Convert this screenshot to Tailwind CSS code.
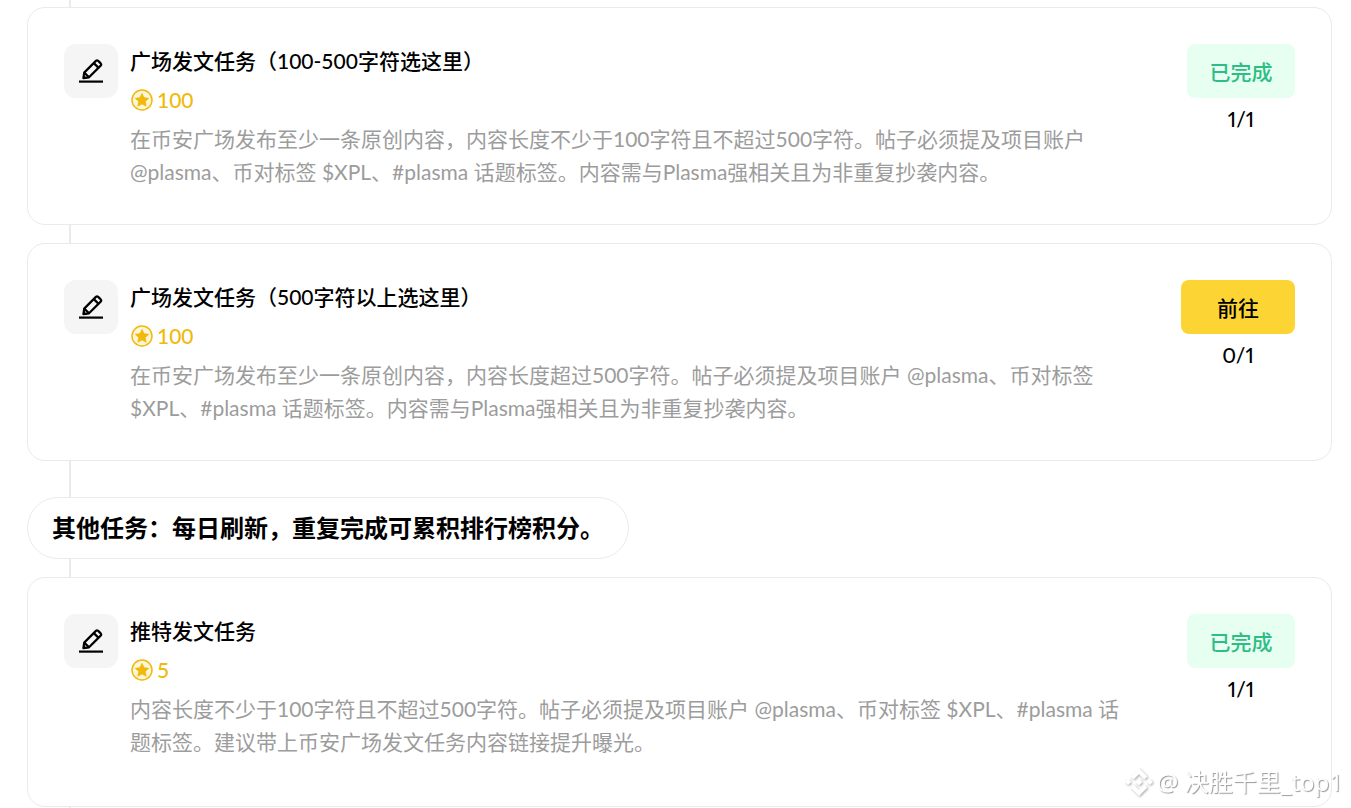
<!DOCTYPE html>
<html lang="zh-CN">
<head>
<meta charset="utf-8">
<meta name="viewport" content="width=device-width, initial-scale=1">
<title>广场任务</title>
<script src="https://cdn.jsdelivr.net/npm/@tailwindcss/browser@4"></script>
</head>
<body class="bg-white text-black font-[Lato,'Noto_Sans_CJK_SC',sans-serif] text-[21px] leading-[33px]">
<!-- Shared icons -->
<svg class="hidden" aria-hidden="true">
  <symbol id="pen" viewBox="0 0 24 24">
    <g fill="none" stroke="currentColor" stroke-width="2.2" stroke-linejoin="round">
      <path d="M4.4 19.2 5.2 13.6 16.9 1.9Q18 .9 19.2 1.9L21.700 4.400Q22.700 5.500 21.700 6.600L10 18.300Z"/>
      <path d="m14.800 4.100 4.800 4.800M5.200 13.600 10 18.300"/>
    </g>
    <path d="M4.200 19.400v-4l4 4z" fill="currentColor"/>
    <path d="M0 21.500h24v2.200H0z" fill="currentColor"/>
  </symbol>
  <symbol id="coin" viewBox="0 0 22 22">
    <circle cx="11" cy="11" r="10" fill="#fef6d8" stroke="#f0b90b" stroke-width="1.500"/>
    <path d="m11 4.300 2.100 4.300 4.700.7-3.400 3.300.8 4.700-4.200-2.200-4.200 2.200.8-4.700-3.400-3.300 4.700-.7z" fill="#f0b90b" stroke="#f0b90b" stroke-width=".6" stroke-linejoin="round"/>
  </symbol>
</svg>

<main class="flex flex-col pl-[27px] pr-[19px]">
  <div class="ml-[42px] h-[7px] w-0.5 bg-[#eaeaea]"></div>

  <article class="flex items-start rounded-[18px] border border-[#eaeaea] p-9">
    <div class="flex size-[54px] shrink-0 items-center justify-center rounded-xl bg-[#f5f5f5]"><svg class="size-6" aria-hidden="true"><use href="#pen"/></svg></div>
    <div class="flex min-w-0 flex-1 flex-col gap-1.5 pl-3 pr-12">
      <h3 class="font-medium">广场发文任务（100-500字符选这里）</h3>
      <p class="flex items-center gap-[3px] font-medium text-[#f0b90b]"><svg class="size-6 p-px" aria-hidden="true"><use href="#coin"/></svg>100</p>
      <p class="text-[#9c9c9c]">在币安广场发布至少一条原创内容，内容长度不少于100字符且不超过500字符。帖子必须提及项目账户 @plasma、币对标签 $XPL、#plasma 话题标签。内容需与Plasma强相关且为非重复抄袭内容。</p>
    </div>
    <div class="flex shrink-0 flex-col items-center gap-1 font-medium">
      <button class="h-[54px] w-[108px] rounded-lg bg-[#e6fff1] text-[#2ebd85]">已完成</button>
      <span class="proportional-nums">1/1</span>
    </div>
  </article>

  <div class="ml-[42px] h-[18px] w-0.5 bg-[#eaeaea]"></div>

  <article class="flex items-start rounded-[18px] border border-[#eaeaea] p-9">
    <div class="flex size-[54px] shrink-0 items-center justify-center rounded-xl bg-[#f5f5f5]"><svg class="size-6" aria-hidden="true"><use href="#pen"/></svg></div>
    <div class="flex min-w-0 flex-1 flex-col gap-1.5 pl-3 pr-12">
      <h3 class="font-medium">广场发文任务（500字符以上选这里）</h3>
      <p class="flex items-center gap-[3px] font-medium text-[#f0b90b]"><svg class="size-6 p-px" aria-hidden="true"><use href="#coin"/></svg>100</p>
      <p class="text-[#9c9c9c]">在币安广场发布至少一条原创内容，内容长度超过500字符。帖子必须提及项目账户 @plasma、币对标签 $XPL、#plasma 话题标签。内容需与Plasma强相关且为非重复抄袭内容。</p>
    </div>
    <div class="flex shrink-0 flex-col items-center gap-1 font-medium">
      <button class="h-[54px] w-[114px] rounded-lg bg-[#fcd535]">前往</button>
      <span class="proportional-nums">0/1</span>
    </div>
  </article>

  <div class="ml-[42px] h-9 w-0.5 bg-[#eaeaea]"></div>

  <h2 class="self-start rounded-full border border-[#eaeaea] px-6 py-3 text-2xl leading-9 font-bold">其他任务：每日刷新，重复完成可累积排行榜积分。</h2>

  <div class="ml-[42px] h-[18px] w-0.5 bg-[#eaeaea]"></div>

  <article class="flex items-start rounded-[18px] border border-[#eaeaea] p-9 pb-12">
    <div class="flex size-[54px] shrink-0 items-center justify-center rounded-xl bg-[#f5f5f5]"><svg class="size-6" aria-hidden="true"><use href="#pen"/></svg></div>
    <div class="flex min-w-0 flex-1 flex-col gap-1.5 pl-3 pr-12">
      <h3 class="font-medium">推特发文任务</h3>
      <p class="flex items-center gap-[3px] font-medium text-[#f0b90b]"><svg class="size-6 p-px" aria-hidden="true"><use href="#coin"/></svg>5</p>
      <p class="text-[#9c9c9c]">内容长度不少于100字符且不超过500字符。帖子必须提及项目账户 @plasma、币对标签 $XPL、#plasma 话题标签。建议带上币安广场发文任务内容链接提升曝光。</p>
    </div>
    <div class="flex shrink-0 flex-col items-center gap-1 font-medium">
      <button class="h-[54px] w-[108px] rounded-lg bg-[#e6fff1] text-[#2ebd85]">已完成</button>
      <span class="proportional-nums">1/1</span>
    </div>
  </article>

  <div class="ml-[42px] h-px w-0.5 bg-[#eaeaea]"></div>
</main>

<!-- Author watermark over the page corner -->
<div class="fixed right-2 bottom-2 flex items-center gap-1 text-2xl leading-9 whitespace-nowrap text-white font-['Noto_Sans','Noto_Sans_CJK_SC',sans-serif] [text-shadow:1px_1px_1px_#999]">
  <svg class="size-7 drop-shadow-[1px_1px_1px_#aaa]" viewBox="0 0 28 28" fill="#fff" aria-hidden="true">
    <path d="M14 0 22.500 8.500 19.400 11.600 14 6.200 8.600 11.600 5.500 8.500ZM3.100 10.900 6.200 14 3.100 17.100 0 14ZM24.900 10.900 28 14 24.900 17.100 21.800 14ZM14 10.500 17.500 14 14 17.500 10.500 14ZM8.600 16.400 14 21.800 19.400 16.400 22.500 19.500 14 28 5.500 19.500Z"/>
  </svg>
  <span>@ 决胜千里_top1</span>
</div>
</body>
</html>
